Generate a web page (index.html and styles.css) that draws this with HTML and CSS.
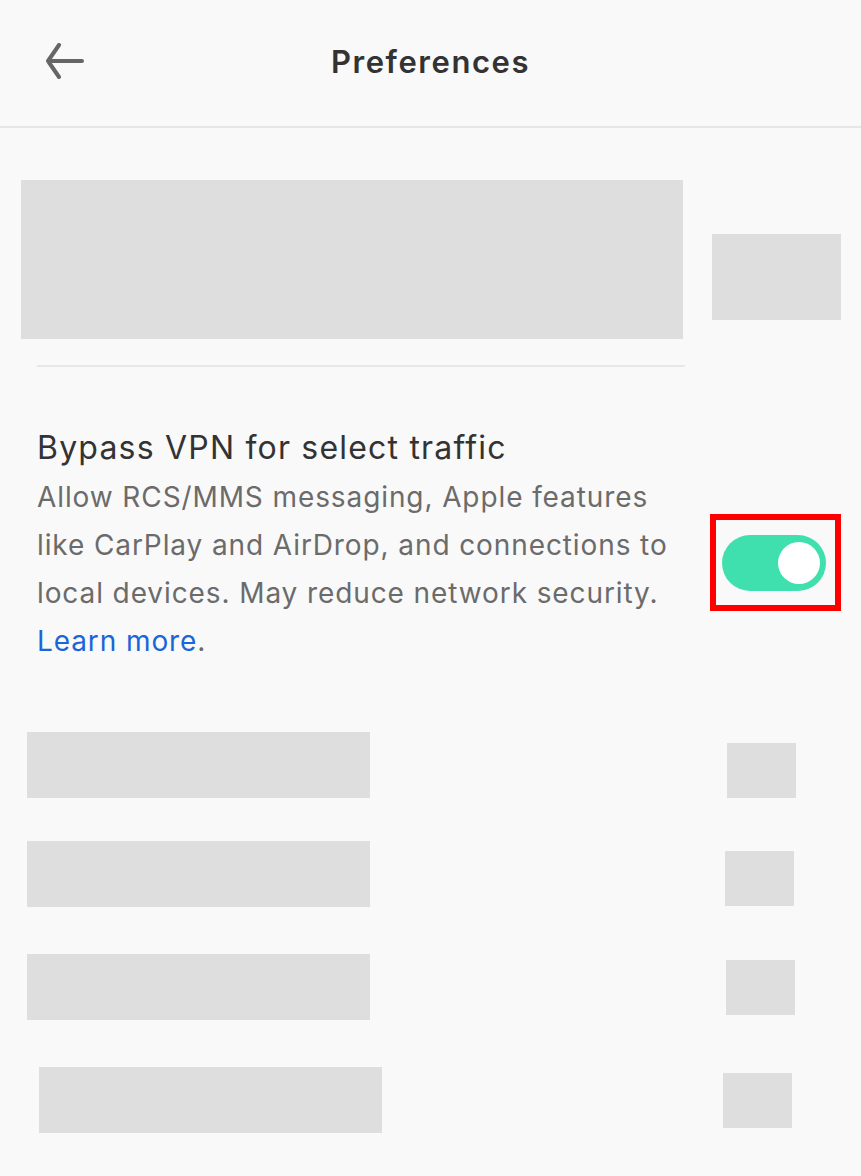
FILE: index.html
```html
<!DOCTYPE html>
<html lang="en">
<head>
<meta charset="utf-8">
<title>Preferences</title>
<link rel="stylesheet" href="styles.css">
</head>
<body>
<div class="page">
  <header class="topbar">
    <div class="topbar-left">
      <svg class="back-icon" width="42" height="38" viewBox="0 0 42 38" aria-hidden="true">
        <path d="M4 18 H38 M15 2 L4 18 L15 34" fill="none" stroke="#666666" stroke-width="4" stroke-linecap="round" stroke-linejoin="round"/>
      </svg>
    </div>
    <h1 class="topbar-title">Preferences</h1>
    <div class="topbar-right"></div>
  </header>

  <section class="hero-row">
    <div class="ph ph-hero"></div>
    <div class="ph ph-hero-side"></div>
  </section>
  <div class="divider"></div>

  <section class="setting">
    <div class="setting-text">
      <h2 class="setting-title">Bypass VPN for select traffic</h2>
      <p class="setting-desc">Allow RCS/MMS messaging, Apple features like CarPlay and AirDrop, and connections to local devices. May reduce network security. <a class="learn" href="#">Learn more</a>.</p>
    </div>
    <div class="highlight">
      <div class="toggle"><div class="knob"></div></div>
    </div>
  </section>

  <section class="ph-list">
    <div class="ph-row r1"><div class="ph ph-label"></div><div class="ph ph-ctrl"></div></div>
    <div class="ph-row r2"><div class="ph ph-label"></div><div class="ph ph-ctrl"></div></div>
    <div class="ph-row r3"><div class="ph ph-label"></div><div class="ph ph-ctrl"></div></div>
    <div class="ph-row r4"><div class="ph ph-label"></div><div class="ph ph-ctrl"></div></div>
  </section>
</div>
</body>
</html>
```

FILE: styles.css
```css
* { box-sizing: border-box; }
html, body {
  margin: 0;
  padding: 0;
  background: #f9f9f9;
}
body {
  font-family: "Inter", "Noto Sans", "Liberation Sans", sans-serif;
  color: #333333;
}
.page {
  width: 861px;
  min-height: 1176px;
  display: flex;
  flex-direction: column;
}

/* Header */
.topbar {
  height: 128px;
  border-bottom: 2px solid #e6e6e6;
  display: grid;
  grid-template-columns: 1fr auto 1fr;
  align-items: center;
}
.topbar-left {
  padding-left: 44px;
  display: flex;
  align-items: center;
  padding-bottom: 2px;
}
.back-icon { display: block; }
.topbar-title {
  margin: 0;
  font-family: "Inter", "Noto Sans", sans-serif;
  font-weight: 600;
  font-size: 31px;
  letter-spacing: 1.55px;
  color: #333333;
  padding-bottom: 4px;
}

/* Placeholders */
.ph { background: #dedede; }

.hero-row {
  display: flex;
  align-items: flex-start;
  padding: 52px 0 0 21px;
}
.ph-hero { width: 662px; height: 159px; }
.ph-hero-side { width: 129px; height: 86px; margin: 54px 0 0 29px; }

.divider {
  margin: 26px 0 0 37px;
  width: 648px;
  height: 2px;
  background: #e8e8e8;
}

/* Setting row */
.setting {
  display: flex;
  align-items: center;
  padding: 61px 0 0 37px;
}
.setting-text { width: 640px; }
.setting-title {
  margin: 0;
  font-size: 32px;
  line-height: 40px;
  letter-spacing: 1.2px;
  font-weight: 400;
  color: #333333;
}
.setting-desc {
  margin: 5px 0 0;
  font-size: 28px;
  line-height: 48px;
  letter-spacing: 0.9px;
  color: #6b6b6b;
}
.learn {
  color: #1a66d8;
  text-decoration: none;
}

.highlight {
  margin: 32px 0 0 33px;
  border: 6px solid #ff0000;
  padding: 15px 9px 14px 6px;
}
.toggle {
  width: 104px;
  height: 56px;
  border-radius: 28px;
  background: #3fe0ae;
  display: flex;
  align-items: center;
  justify-content: flex-end;
  padding-right: 6px;
}
.knob {
  width: 42px;
  height: 42px;
  border-radius: 50%;
  background: #ffffff;
}

/* Placeholder list */
.ph-list {
  display: flex;
  flex-direction: column;
  padding-top: 67px;
}
.ph-row {
  display: flex;
  align-items: flex-start;
  padding-left: 27px;
}
.ph-label { width: 343px; height: 66px; }
.ph-ctrl { width: 69px; height: 55px; margin-left: auto; }

.r1 .ph-ctrl { margin-top: 11px; margin-right: 65px; }
.r2 { margin-top: 43px; }
.r2 .ph-ctrl { margin-top: 10px; margin-right: 67px; }
.r3 { margin-top: 47px; }
.r3 .ph-ctrl { margin-top: 6px; margin-right: 66px; }
.r4 { margin-top: 47px; padding-left: 39px; }
.r4 .ph-ctrl { margin-top: 6px; margin-right: 69px; }
```
